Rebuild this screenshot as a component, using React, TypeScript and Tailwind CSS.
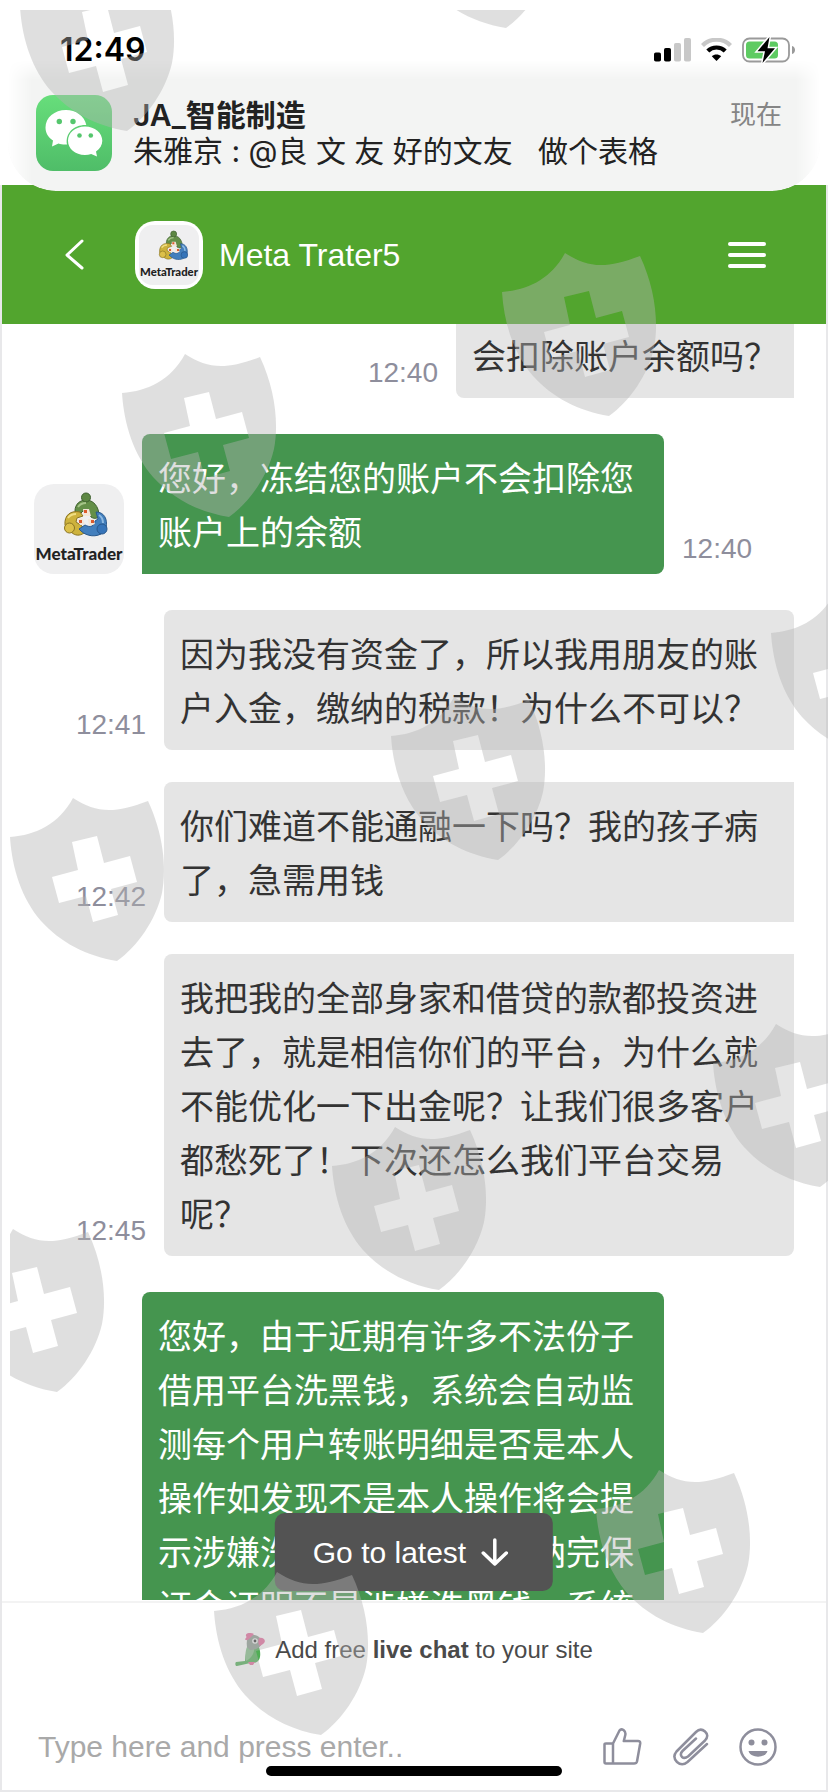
import { useState } from 'react'
import type { ReactNode } from 'react'

type Message = {
  id: number
  from: 'agent' | 'me'
  text: string
  time?: string
  corners: string
  spacing: string
  showAvatar?: boolean
}

const messages: Message[] = [
  {
    id: 1,
    from: 'me',
    text: '会扣除账户余额吗？',
    time: '12:40',
    corners: 'rounded-bl-lg pt-1.5',
    spacing: '',
  },
  {
    id: 2,
    from: 'agent',
    text: '您好，冻结您的账户不会扣除您账户上的余额',
    time: '12:40',
    corners: 'rounded-t-lg rounded-br-lg pt-4.5',
    spacing: 'mt-9',
    showAvatar: true,
  },
  {
    id: 3,
    from: 'me',
    text: '因为我没有资金了，所以我用朋友的账户入金，缴纳的税款！为什么不可以？',
    time: '12:41',
    corners: 'rounded-t-lg rounded-bl-lg pt-4.5',
    spacing: 'mt-9',
  },
  {
    id: 4,
    from: 'me',
    text: '你们难道不能通融一下吗？我的孩子病了，急需用钱',
    time: '12:42',
    corners: 'rounded-l-lg pt-4.5',
    spacing: 'mt-8',
  },
  {
    id: 5,
    from: 'me',
    text: '我把我的全部身家和借贷的款都投资进去了，就是相信你们的平台，为什么就不能优化一下出金呢？让我们很多客户都愁死了！下次还怎么我们平台交易呢？',
    time: '12:45',
    corners: 'rounded-l-lg rounded-br-lg pt-4.5',
    spacing: 'mt-8',
  },
  {
    id: 6,
    from: 'agent',
    text: '您好，由于近期有许多不法份子借用平台洗黑钱，系统会自动监测每个用户转账明细是否是本人操作如发现不是本人操作将会提示涉嫌洗黑钱，需要您缴纳完保证金证明不是涉嫌洗黑钱，系统',
    corners: 'rounded-t-lg pt-4.5',
    spacing: 'mt-9',
  },
]

const shields = [
  [10, -42],
  [389, -145],
  [492, 243],
  [112, 344],
  [761, 584],
  [381, 687],
  [0, 788],
  [703, 1014],
  [322, 1117],
  [-60, 1219],
  [586, 1460],
  [204, 1562],
]

function Watermark() {
  return (
    <svg
      aria-hidden="true"
      className="pointer-events-none absolute left-2.5 top-2.5 z-30"
      width="818"
      height="1782"
      fill="#b2b2b2"
      fillOpacity=".42"
      fillRule="evenodd"
    >
      {shields.map(([x, y]) => (
        <path
          key={`${x}-${y}`}
          transform={`translate(${x} ${y})`}
          d="M0 39C26 37 49 26 63 0C86 15 104 16 138 3C153 35 157 69 152 95C146 122 127 149 107 163C76 158 50 144 31 123C12 101 2 71 0 39ZM62 44L87 38L94 65L120 58L127 84L101 91L108 117L83 124L76 98L49 105L42 79L68 72Z"
        />
      ))}
    </svg>
  )
}

function MetaTraderLogo({ className }: { className: string }) {
  return (
    <svg viewBox="0 0 90 90" className={className} role="img" aria-label="MetaTrader">
      <rect width="90" height="90" rx="20" fill="#efeff0" />
      {/* Green figure */}
      <path d="M41 27C41 20 46 16 52 16C59 16 65 22 65 32C63 35 60 35 57 33L55 27L49 27L45 31Z" fill="#648f48" stroke="#3f6130" strokeWidth="1" />
      <circle cx="52" cy="13.500" r="4.500" fill="#5d8743" stroke="#3f6130" strokeWidth="1" />
      {/* Yellow figure */}
      <path d="M31 41C30 31 37 26 46 28L49 32L43 34L42 38L48 42L50 49C46 52 41 52 37 48Z" fill="#cdb23c" stroke="#8a7422" strokeWidth="1" />
      <circle cx="35.500" cy="44" r="5" fill="#dcc04a" stroke="#8a7422" strokeWidth="1" />
      {/* Blue figure */}
      <path d="M62 28C70 28 74 35 72 44L67 50C59 54 50 51 45 45L51 41C56 44 61 42 61 37L64 35Z" fill="#437fbd" stroke="#28588d" strokeWidth="1" />
      <circle cx="68" cy="45" r="5" fill="#3674b9" stroke="#28588d" strokeWidth="1" />
      <path d="M49 25L55 25L57 32L50 32ZM43 35L48 34L51 40L46 41ZM54 35L59 35L61 40L55 42Z" fill="#f4e6d8" />
      <path d="M50 26H53V29H50ZM45 36H48V39H45ZM57 36H60V39H57Z" fill="#dd5a2c" />
      <path d="M44 23C46 20 49 19 52 19" stroke="#a5c488" strokeWidth="2" fill="none" />
      <path d="M34 34C36 31 39 30 42 30" stroke="#f0de83" strokeWidth="2" fill="none" />
      <path d="M65 31C68 33 69 36 69 39" stroke="#8db9e2" strokeWidth="2" fill="none" />
      <text x="45" y="76" textAnchor="middle" fontSize="17" fontWeight="900" fill="#222" className="font-['Lato',sans-serif]">
        MetaTrader
      </text>
    </svg>
  )
}

function StatusBar() {
  return (
    <div className="relative z-10 flex items-center justify-between pl-15 pr-8 pt-8">
      <span className="font-['Inter',sans-serif] text-[32px] leading-9 font-semibold text-black">12:49</span>
      <div className="flex items-center gap-2.5">
        <svg width="37" height="24" viewBox="0 0 37 24" aria-label="Signal">
          <rect y="14.500" width="7" height="9" rx="1.800" />
          <rect x="10" y="10" width="7" height="13.500" rx="1.800" />
          <rect x="20" y="5" width="7" height="18.500" rx="1.800" fill="#c8c8c8" />
          <rect x="30" width="7" height="23.500" rx="1.800" fill="#c8c8c8" />
        </svg>
        <svg width="31" height="24" viewBox="0 0 31 24" fill="none" aria-label="Wi-Fi">
          <path d="M1.500 7.500C9 -.2 22 -.2 29.500 7.500" stroke="#c8c8c8" strokeWidth="4.200" />
          <path d="M6.800 13C11.500 8.300 19.500 8.300 24.200 13" stroke="#000" strokeWidth="4.200" />
          <path d="M15.500 23L10.800 18.200C13.300 15.900 17.700 15.900 20.200 18.200Z" fill="#000" />
        </svg>
        <svg width="54" height="26" viewBox="0 0 54 26" aria-label="Battery">
          <rect x="1" y="1.500" width="46" height="23" rx="6.500" fill="#fff" stroke="#9a9a9a" strokeWidth="1.800" />
          <rect x="4" y="4.500" width="32" height="17" rx="3.500" fill="#5ecb62" />
          <path d="M50 9C54 10 54 16 50 17Z" fill="#9a9a9a" />
          <path d="M27.500 0L15.500 14.300H23L20.500 26L33 11.300H25.500Z" fill="#000" stroke="#fff" strokeWidth="3" paintOrder="stroke" />
        </svg>
      </div>
    </div>
  )
}

function Notification() {
  return (
    <div className="relative px-9 pt-[27px]">
      {/* Banner surface, hangs a little over the chat header */}
      <div className="absolute inset-x-2 -bottom-5 -top-2 rounded-b-[48px] bg-[#f3f4f3] mask-x-from-97% mask-t-from-85%" />
      <div className="relative flex gap-[21px]">
        <svg viewBox="0 0 76 76" className="size-19 shrink-0" aria-label="WeChat">
          <defs>
            <linearGradient id="wechat" x1="0" y1="0" x2="0" y2="1">
              <stop stopColor="#67de7b" />
              <stop offset="1" stopColor="#4fbd68" />
            </linearGradient>
          </defs>
          <rect width="76" height="76" rx="17" fill="url(#wechat)" />
          <path d="M30 15C18.500 15 9.500 22.500 9.500 32.500C9.500 38 12.300 42.500 17 45.500L16 51.500L22.500 48.500C25 49.300 27.500 49.600 31 49.400C29 38 38 29.500 50.300 30C48.500 21 39.800 15 30 15Z" fill="#fff" />
          <path d="M49 31.500C39 31.500 32 38 32 45.800C32 53.700 39 60 49 60C51.200 60 53.300 59.700 55.200 59L61 61.500L60 56.500C64 53.700 66.300 50 66.300 45.800C66.300 38 59 31.500 49 31.500Z" fill="#fff" />
          <g fill="#55c66d">
            <circle cx="23.300" cy="26.500" r="2.700" />
            <circle cx="37" cy="26.500" r="2.700" />
            <circle cx="43.500" cy="40.500" r="2.300" />
            <circle cx="54.800" cy="40.500" r="2.300" />
          </g>
        </svg>
        <div className="min-w-0 flex-1 font-['Inter','Noto_Sans_CJK_SC',sans-serif] text-[30px] leading-9 text-[#222]">
          <div className="flex items-center justify-between pt-0.5 pr-2.5">
            <span className="font-semibold">JA_智能制造</span>
            <span className="text-[26px] text-[#858585]">现在</span>
          </div>
          <p className="whitespace-pre">朱雅京 : @良 文 友 好的文友   做个表格</p>
        </div>
      </div>
    </div>
  )
}

function ChatHeader() {
  return (
    <header className="flex h-[139px] shrink-0 items-center bg-[#52a52e] pl-15 pr-15">
      <button type="button" aria-label="Back" className="flex h-10 w-6 items-center justify-center">
        <svg width="20" height="32" viewBox="0 0 20 32" fill="none" stroke="#fff" strokeWidth="3" strokeLinecap="round" strokeLinejoin="round">
          <path d="M18 2L3 16L18 29" />
        </svg>
      </button>
      <div className="ml-[49px] rounded-[20px] bg-white p-1">
        <MetaTraderLogo className="size-15" />
      </div>
      <h1 className="ml-4 flex-1 text-[32px] leading-10 text-white">Meta Trater5</h1>
      <button type="button" aria-label="Menu" className="flex flex-col gap-[7px]">
        <span className="h-1 w-[38px] rounded-full bg-white" />
        <span className="h-1 w-[38px] rounded-full bg-white" />
        <span className="h-1 w-[38px] rounded-full bg-white" />
      </button>
    </header>
  )
}

function Bubble({ message }: { message: Message }) {
  const { from, text, time, corners, spacing, showAvatar } = message
  const timeLabel = time && <time className="mb-[9px] shrink-0 text-[28px] leading-8 text-[#8e8e9c]">{time}</time>

  if (from === 'me') {
    return (
      <li className={`flex items-end justify-end gap-[18px] ${spacing}`}>
        {timeLabel}
        <p className={`max-w-[630px] bg-[#e5e5e5] px-4 pb-3.5 text-[#333] ${corners}`}>{text}</p>
      </li>
    )
  }

  return (
    <li className={`flex items-end gap-[18px] ${spacing}`}>
      {showAvatar ? <MetaTraderLogo className="size-[90px] shrink-0" /> : <span className="w-[90px] shrink-0" />}
      <p className={`max-w-[522px] bg-[#45954f] px-4 pb-3.5 text-white ${corners}`}>{text}</p>
      {timeLabel}
    </li>
  )
}

function IconButton({ label, children }: { label: string; children: ReactNode }) {
  return (
    <button type="button" aria-label={label} className="shrink-0">
      <svg width="40" height="40" viewBox="0 0 40 40" fill="none" stroke="#8e8e9c" strokeWidth="2.500" strokeLinecap="round" strokeLinejoin="round">
        {children}
      </svg>
    </button>
  )
}

function Footer() {
  const [draft, setDraft] = useState('')

  return (
    <footer className="relative shrink-0 pt-px">
      <div className="border-t-2 border-[#f3f3f3] pt-[30px]">
        <a href="#" className="flex items-center justify-center gap-2 text-2xl text-[#4a4a4a]">
          <svg width="32" height="34" viewBox="0 0 32 34" aria-hidden="true">
            <path d="M1 29L10 28C10 22 12 17 13 12H23C26 18 26 25 23 28C20 31 14 30 11 31L2 33C0 33 0 30 1 29Z" fill="#4fae55" />
            <path d="M13 12C10 17 10 24 11 28C17 25 20 19 19 14Z" fill="#84bf88" />
            <path d="M12 14C11 6 13 2 18 2C24 2 27 6 26 12C24 16 19 17 15 17Z" fill="#8d9b91" />
            <path d="M19 1C15 -1 10 0 11 3C12 4 11 5 10 6C11 8 13 7 14 6ZM24 5C29 4 32 8 28 11L25 13C23 11 23 8 24 5Z" fill="#e56a9c" />
            <circle cx="20" cy="8" r="2.800" fill="#eee" />
            <circle cx="20" cy="8" r="1.400" fill="#333" />
            <path d="M13 29L20 29L18 32H15Z" fill="#e56a9c" />
          </svg>
          <span>
            Add free <b>live chat</b> to your site
          </span>
        </a>
      </div>
      <form className="mt-13 flex items-center pb-[15px] pl-9 pr-12" onSubmit={(e) => e.preventDefault()}>
        <input
          type="text"
          aria-label="Message"
          placeholder="Type here and press enter.."
          value={draft}
          onChange={(e) => setDraft(e.target.value)}
          className="h-14 min-w-0 flex-1 text-[30px] outline-none placeholder:text-[#a9a9a9]"
        />
        <div className="flex gap-7">
          <IconButton label="Like">
            <path d="M2.500 17.500Q2.500 16.500 4 16.500H11L17.500 3.500Q19 1.500 21.500 3Q24 5 23.300 8L21.800 14H36Q38.500 14 38.200 16.500L35 34.500Q34.500 36.500 32 36.500H4Q2.500 36.500 2.500 35ZM11 16.500V36.500" />
          </IconButton>
          <IconButton label="Attach file">
            <path d="M37 17L17.500 35Q12 39.500 7 35Q2 30 6.500 24.500L26 5Q30.500 .5 35 4.500Q39.500 8.500 35 13.500L18 29.500Q14.500 32 12 30Q9.500 27 12.500 24L26 11.500" />
          </IconButton>
          <IconButton label="Emoji">
            <circle cx="20" cy="20" r="17.500" />
            <g fill="#8e8e9c" stroke="none">
              <circle cx="13.500" cy="15.500" r="3" />
              <circle cx="26.500" cy="15.500" r="3" />
              <path d="M10.500 24H29.500C27.500 31.500 12.500 31.500 10.500 24Z" />
            </g>
          </IconButton>
        </div>
      </form>
      {/* Home indicator */}
      <div className="absolute bottom-3.5 left-1/2 h-2.5 w-[296px] -translate-x-1/2 rounded-full bg-black" />
    </footer>
  )
}

export default function App() {
  return (
    <div className="relative flex h-screen flex-col overflow-hidden bg-white font-['Liberation_Sans','Noto_Sans_CJK_SC',sans-serif]">
      <div className="relative z-10 h-[185px] shrink-0">
        <StatusBar />
        <Notification />
      </div>

      <div className="flex min-h-0 flex-1 flex-col border-x-2 border-b-2 border-[#e8e8ea]">
        <ChatHeader />

        {/* Conversation */}
        <main className="relative min-h-0 flex-1 overflow-hidden">
          <ol className="px-8 text-[34px] leading-[54px]">
            {messages.map((message) => (
              <Bubble key={message.id} message={message} />
            ))}
          </ol>
          <button
            type="button"
            className="absolute bottom-[9px] left-1/2 flex h-[78px] -translate-x-1/2 items-center gap-[15px] rounded-[10px] bg-[#535353] pl-[38px] pr-11 text-[30px] whitespace-nowrap text-white"
          >
            Go to latest
            <svg width="28" height="28" viewBox="0 0 28 28" fill="none" stroke="#fff" strokeWidth="3.500" strokeLinecap="round" strokeLinejoin="round">
              <path d="M14 2V26M2.500 15L14 26L25.500 15" />
            </svg>
          </button>
        </main>

        <Footer />
      </div>

      <Watermark />
    </div>
  )
}
